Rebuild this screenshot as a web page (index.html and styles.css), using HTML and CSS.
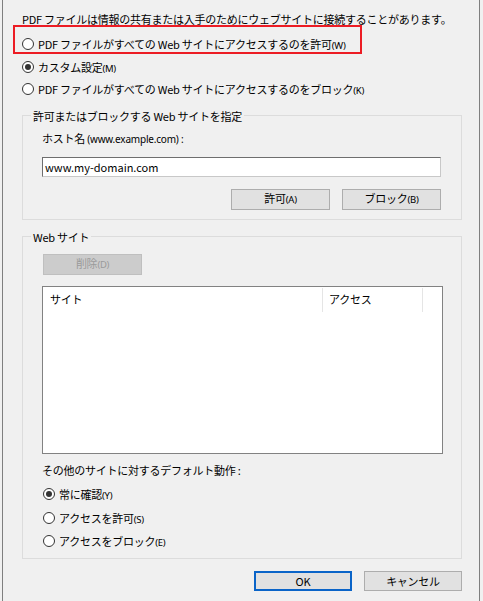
FILE: index.html
```html
<!DOCTYPE html>
<html lang="ja">
<head>
<meta charset="utf-8">
<link rel="stylesheet" href="styles.css">
</head>
<body>
<div class="dialog">
  <p class="intro">PDF ファイルは情報の共有または入手のためにウェブサイトに接続することがあります。</p>
  <div class="radios top-radios">
    <label class="radio"><span class="dot"></span><span>PDF ファイルがすべての Web サイトにアクセスするのを許可<span class="mn">(W)</span></span></label>
    <label class="radio"><span class="dot on"></span><span>カスタム設定<span class="mn">(M)</span></span></label>
    <label class="radio"><span class="dot"></span><span>PDF ファイルがすべての Web サイトにアクセスするのをブロック<span class="mn">(K)</span></span></label>
  </div>
  <div class="highlight"></div>

  <fieldset class="group group-host">
    <legend>許可またはブロックする Web サイトを指定</legend>
    <div class="host-label">ホスト名&nbsp;<span class="small">(www.example.com) :</span></div>
    <div class="input">www.my-domain.com</div>
    <div class="btn-row">
      <div class="btn"><span>許可<span class="mn">(A)</span></span></div>
      <div class="btn"><span>ブロック<span class="mn">(B)</span></span></div>
    </div>
  </fieldset>

  <fieldset class="group group-sites">
    <legend>Web サイト</legend>
    <div class="btn disabled"><span>削除<span class="mn">(D)</span></span></div>
    <div class="list">
      <div class="list-head">
        <div class="col col-site">サイト</div>
        <div class="col col-access">アクセス</div>
        <div class="col col-rest"></div>
      </div>
    </div>
    <div class="default-label">その他のサイトに対するデフォルト動作 :</div>
    <div class="radios bottom-radios">
      <label class="radio"><span class="dot on"></span><span>常に確認<span class="mn">(Y)</span></span></label>
      <label class="radio"><span class="dot"></span><span>アクセスを許可<span class="mn">(S)</span></span></label>
      <label class="radio"><span class="dot"></span><span>アクセスをブロック<span class="mn">(E)</span></span></label>
    </div>
  </fieldset>

  <div class="footer">
    <div class="btn btn-ok">OK</div>
    <div class="btn">キャンセル</div>
  </div>
</div>
</body>
</html>
```

FILE: styles.css
```css
* { box-sizing: border-box; }
html, body {
  margin: 0;
  padding: 0;
  background: #f0f0f0;
}
body {
  font-family: "Noto Sans CJK JP", "Noto Sans", sans-serif;
  font-size: 11px;
  letter-spacing: -0.25px;
  text-autospace: no-autospace;
  color: #000;
}
.dialog {
  position: relative;
  margin-left: 2px;
  width: 478px;
  height: 601px;
  border-left: 1px solid #7f7f7f;
  border-right: 1px solid #7f7f7f;
  padding: 11px 17px 0 19px;
}
.intro {
  margin: 0;
  line-height: 16px;
  height: 16px;
  white-space: nowrap;
}
.mn {
  font-family: "Noto Sans", "Liberation Sans", sans-serif;
  font-size: 9.5px;
  letter-spacing: -0.3px;
}
.small {
  font-family: "Noto Sans", "Liberation Sans", sans-serif;
  font-size: 10px;
  letter-spacing: -0.2px;
}
.radios {
  display: flex;
  flex-direction: column;
}
.top-radios {
  margin-top: 6px;
}
.top-radios .radio {
  height: 22.5px;
}
.radio {
  display: flex;
  align-items: center;
  gap: 4px;
  white-space: nowrap;
}
.dot {
  width: 12px;
  height: 12px;
  border: 1px solid #333;
  border-radius: 50%;
  background: #fff;
  display: flex;
  align-items: center;
  justify-content: center;
  flex: none;
}
.dot.on::after {
  content: "";
  width: 6px;
  height: 6px;
  border-radius: 50%;
  background: #333;
}
.highlight {
  position: absolute;
  left: 10px;
  top: 25px;
  width: 349px;
  height: 29px;
  border: 2.5px solid #ec1c24;
}
.group {
  margin: 0;
  border: 1px solid #dcdcdc;
  padding: 0 19px 9px 19px;
  width: 440px;
  min-width: 0;
}
.group legend {
  margin-left: -11px;
  padding: 0 2px;
  line-height: 16px;
  height: 16px;
}
.group-host {
  margin-top: 7px;
}
.host-label {
  margin-top: 6px;
  line-height: 16px;
}
.input {
  margin-top: 10px;
  height: 20px;
  width: 399px;
  background: #fff;
  border: 1px solid #c8c8c8;
  border-top-color: #6e6e6e;
  border-left-color: #6e6e6e;
  padding-left: 2px;
  line-height: 18px;
  letter-spacing: 0;
}
.btn-row {
  display: flex;
  justify-content: flex-end;
  gap: 12px;
  margin-top: 12px;
  padding-right: 1px;
}
.btn {
  width: 99px;
  height: 21px;
  background: #e1e1e1;
  border: 1px solid #adadad;
  display: flex;
  align-items: center;
  justify-content: center;
  line-height: 1;
}
.btn.disabled {
  background: #cccccc;
  border-color: #bfbfbf;
  color: #9a9a9a;
}
.group-sites {
  margin-top: 9px;
  padding-bottom: 5px;
}
.group-sites .btn.disabled {
  margin-top: 9px;
  margin-left: 1px;
}
.list {
  margin-top: 11px;
  width: 401px;
  height: 168px;
  background: #fff;
  border: 1px solid #828282;
}
.list-head {
  display: flex;
  height: 24px;
  margin-top: 1px;
}
.col {
  line-height: 22px;
  padding-left: 7px;
}
.col-site {
  width: 280px;
  border-right: 1px solid #e5e5e5;
}
.col-access {
  width: 100px;
  border-right: 1px solid #e5e5e5;
  padding-left: 6px;
}
.default-label {
  margin-top: 8px;
  line-height: 16px;
}
.bottom-radios {
  margin-top: 5px;
  padding-left: 1px;
}
.bottom-radios .radio {
  height: 23.5px;
}
.footer {
  display: flex;
  justify-content: flex-end;
  gap: 12px;
  margin-top: 12px;
  width: 440px;
}
.footer .btn {
  width: 98px;
  height: 20px;
}
.btn-ok {
  border: 2px solid #0a64c8;
}
```
